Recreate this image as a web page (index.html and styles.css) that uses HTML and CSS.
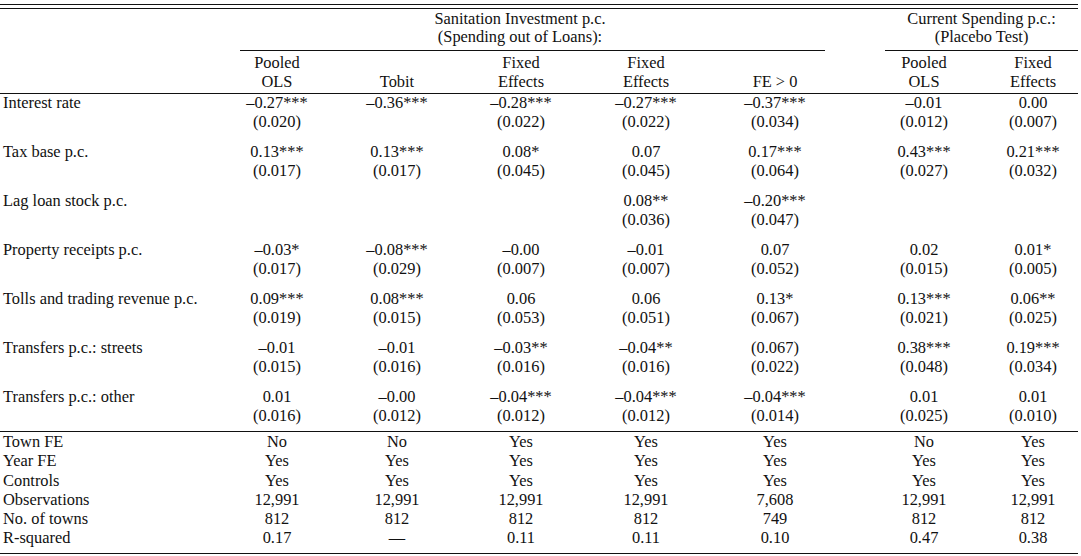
FILE: index.html
```html
<!DOCTYPE html>
<html lang="en">
<head>
<meta charset="utf-8">
<title>Regression table</title>
<link rel="stylesheet" href="styles.css">
</head>
<body>
<div class="frame">
<table class="reg">
  <colgroup>
    <col class="w-label"><col class="w-c1"><col class="w-c2"><col class="w-c3"><col class="w-c4"><col class="w-c5"><col class="w-gap"><col class="w-c6"><col class="w-c7">
  </colgroup>
  <thead>
    <tr class="grp">
      <th></th>
      <th colspan="5"><div class="cmid cmid-a"><div class="grp-text shift">Sanitation Investment p.c.<br>(Spending out of Loans):</div></div></th>
      <th></th>
      <th colspan="2"><div class="cmid cmid-b"><div class="grp-text">Current Spending p.c.:<br>(Placebo Test)</div></div></th>
    </tr>
    <tr class="colhead">
      <th></th>
      <th>Pooled<br>OLS</th>
      <th><br>Tobit</th>
      <th>Fixed<br>Effects</th>
      <th>Fixed<br>Effects</th>
      <th><br>FE &gt; 0</th>
      <th></th>
      <th>Pooled<br>OLS</th>
      <th class="last">Fixed<br>Effects</th>
    </tr>
  </thead>
  <tbody class="coefs">
    <tr class="coef"><td>Interest rate</td><td>–0.27***</td><td>–0.36***</td><td>–0.28***</td><td>–0.27***</td><td>–0.37***</td><td></td><td>–0.01</td><td class="last">0.00</td></tr>
    <tr class="se"><td></td><td>(0.020)</td><td></td><td>(0.022)</td><td>(0.022)</td><td>(0.034)</td><td></td><td>(0.012)</td><td class="last">(0.007)</td></tr>
    <tr class="coef"><td>Tax base p.c.</td><td>0.13***</td><td>0.13***</td><td>0.08*</td><td>0.07</td><td>0.17***</td><td></td><td>0.43***</td><td class="last">0.21***</td></tr>
    <tr class="se"><td></td><td>(0.017)</td><td>(0.017)</td><td>(0.045)</td><td>(0.045)</td><td>(0.064)</td><td></td><td>(0.027)</td><td class="last">(0.032)</td></tr>
    <tr class="coef"><td>Lag loan stock p.c.</td><td></td><td></td><td></td><td>0.08**</td><td>–0.20***</td><td></td><td></td><td class="last"></td></tr>
    <tr class="se"><td></td><td></td><td></td><td></td><td>(0.036)</td><td>(0.047)</td><td></td><td></td><td class="last"></td></tr>
    <tr class="coef"><td>Property receipts p.c.</td><td>–0.03*</td><td>–0.08***</td><td>–0.00</td><td>–0.01</td><td>0.07</td><td></td><td>0.02</td><td class="last">0.01*</td></tr>
    <tr class="se"><td></td><td>(0.017)</td><td>(0.029)</td><td>(0.007)</td><td>(0.007)</td><td>(0.052)</td><td></td><td>(0.015)</td><td class="last">(0.005)</td></tr>
    <tr class="coef"><td>Tolls and trading revenue p.c.</td><td>0.09***</td><td>0.08***</td><td>0.06</td><td>0.06</td><td>0.13*</td><td></td><td>0.13***</td><td class="last">0.06**</td></tr>
    <tr class="se"><td></td><td>(0.019)</td><td>(0.015)</td><td>(0.053)</td><td>(0.051)</td><td>(0.067)</td><td></td><td>(0.021)</td><td class="last">(0.025)</td></tr>
    <tr class="coef"><td>Transfers p.c.: streets</td><td>–0.01</td><td>–0.01</td><td>–0.03**</td><td>–0.04**</td><td>(0.067)</td><td></td><td>0.38***</td><td class="last">0.19***</td></tr>
    <tr class="se"><td></td><td>(0.015)</td><td>(0.016)</td><td>(0.016)</td><td>(0.016)</td><td>(0.022)</td><td></td><td>(0.048)</td><td class="last">(0.034)</td></tr>
    <tr class="coef"><td>Transfers p.c.: other</td><td>0.01</td><td>–0.00</td><td>–0.04***</td><td>–0.04***</td><td>–0.04***</td><td></td><td>0.01</td><td class="last">0.01</td></tr>
    <tr class="se end"><td></td><td>(0.016)</td><td>(0.012)</td><td>(0.012)</td><td>(0.012)</td><td>(0.014)</td><td></td><td>(0.025)</td><td class="last">(0.010)</td></tr>
  </tbody>
  <tbody class="stats">
    <tr><td>Town FE</td><td>No</td><td>No</td><td>Yes</td><td>Yes</td><td>Yes</td><td></td><td>No</td><td class="last">Yes</td></tr>
    <tr><td>Year FE</td><td>Yes</td><td>Yes</td><td>Yes</td><td>Yes</td><td>Yes</td><td></td><td>Yes</td><td class="last">Yes</td></tr>
    <tr><td>Controls</td><td>Yes</td><td>Yes</td><td>Yes</td><td>Yes</td><td>Yes</td><td></td><td>Yes</td><td class="last">Yes</td></tr>
    <tr><td>Observations</td><td>12,991</td><td>12,991</td><td>12,991</td><td>12,991</td><td>7,608</td><td></td><td>12,991</td><td class="last">12,991</td></tr>
    <tr><td>No. of towns</td><td>812</td><td>812</td><td>812</td><td>812</td><td>749</td><td></td><td>812</td><td class="last">812</td></tr>
    <tr class="final"><td>R-squared</td><td>0.17</td><td>—</td><td>0.11</td><td>0.11</td><td>0.10</td><td></td><td>0.47</td><td class="last">0.38</td></tr>
  </tbody>
</table>
</div>
</body>
</html>
```

FILE: styles.css
```css
html, body {
  margin: 0;
  padding: 0;
  background: #ffffff;
}

body {
  font-family: "Liberation Serif", "Times New Roman", serif;
  font-size: 16.4px;
  color: #111111;
}

.frame {
  width: 1078px;
  margin-top: 4px;
  border-top: 1px solid #111111;
  padding-top: 3px;
}

.reg {
  width: 1078px;
  table-layout: fixed;
  border-collapse: separate;
  border-spacing: 0;
  border-top: 1px solid #111111;
}

.w-label { width: 218px; }
.w-c1 { width: 118px; }
.w-c2 { width: 122px; }
.w-c3 { width: 126px; }
.w-c4 { width: 124px; }
.w-c5 { width: 134px; }
.w-gap { width: 24px; }
.w-c6 { width: 116px; }
.w-c7 { width: 96px; }

.reg th,
.reg td {
  padding: 0;
  font-weight: normal;
  text-align: center;
  vertical-align: top;
  white-space: nowrap;
}

.reg td:first-child {
  text-align: left;
  padding-left: 3px;
}

.reg .last {
  padding-left: 6px;
}

/* group header row */
.grp th {
  padding-top: 1px;
  line-height: 18px;
}

.cmid {
  border-bottom: 1px solid #111111;
  padding-bottom: 4px;
}

.cmid-a {
  margin-left: 22px;
  margin-right: 17px;
}

.cmid-b {
  margin-left: 19px;
}

.grp-text.shift {
  padding-right: 25px;
}

/* column header row */
.colhead th {
  line-height: 19px;
  padding-top: 2px;
  padding-bottom: 2px;
  border-bottom: 1px solid #111111;
}

/* coefficient rows */
.coefs td {
  line-height: 18.5px;
}

.coefs .se td {
  padding-bottom: 12px;
}

.coefs .se.end td {
  padding-bottom: 6px;
  border-bottom: 1px solid #111111;
}

/* summary statistics */
.stats td {
  line-height: 19.3px;
}

.stats .final td {
  padding-bottom: 5px;
  border-bottom: 1px solid #111111;
}
```
